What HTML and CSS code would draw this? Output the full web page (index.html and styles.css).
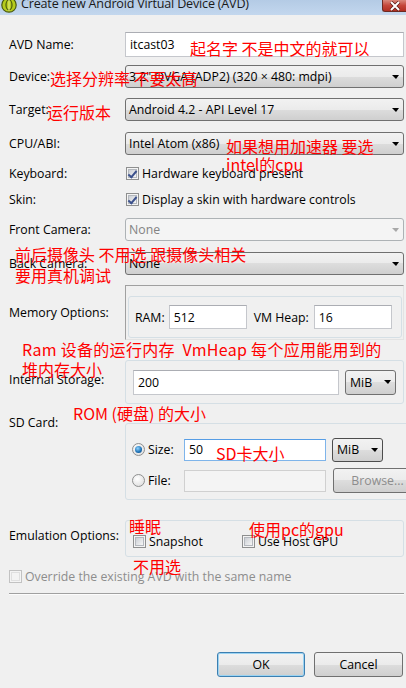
FILE: index.html
```html
<!DOCTYPE html>
<html>
<head>
<meta charset="utf-8">
<link rel="stylesheet" href="styles.css">
</head>
<body>
<div class="window">
  <div class="titlebar">
    <svg class="appicon" width="16" height="16" viewBox="0 0 16 16">
      <circle cx="8" cy="8" r="7.2" fill="#b5cc1e" stroke="#4a5a10" stroke-width="1.2"/>
      <ellipse cx="8" cy="8" rx="3" ry="5" fill="none" stroke="#4a5a10" stroke-width="1.2"/>
      <path d="M8 2 V14" stroke="#e7f08a" stroke-width="1"/>
    </svg>
    <span class="title">Create new Android Virtual Device (AVD)</span>
    <span class="close">
      <svg width="14" height="10" viewBox="0 0 14 10"><path d="M3 1 L11 9 M11 1 L3 9" stroke="#5a1a14" stroke-width="3.4"/><path d="M3 1 L11 9 M11 1 L3 9" stroke="#fff" stroke-width="2"/></svg>
    </span>
  </div>

  <div class="content">
    <div class="row r-name">
      <span class="lbl">AVD Name:</span>
      <div class="tb ctl">itcast03</div>
    </div>
    <div class="row r-device">
      <span class="lbl">Device:</span>
      <div class="combo ctl">3.2" QVGA (ADP2) (320 × 480: mdpi)</div>
    </div>
    <div class="row r-target">
      <span class="lbl">Target:</span>
      <div class="combo ctl">Android 4.2 - API Level 17</div>
    </div>
    <div class="row r-cpu">
      <span class="lbl">CPU/ABI:</span>
      <div class="combo ctl">Intel Atom (x86)</div>
    </div>
    <div class="row r-kb">
      <span class="lbl">Keyboard:</span>
      <span class="cb checked"></span><span class="cbtext">Hardware keyboard present</span>
    </div>
    <div class="row r-skin">
      <span class="lbl">Skin:</span>
      <span class="cb checked"></span><span class="cbtext">Display a skin with hardware controls</span>
    </div>
    <div class="row r-front">
      <span class="lbl">Front Camera:</span>
      <div class="combo disabled ctl">None</div>
    </div>
    <div class="row r-back">
      <span class="lbl">Back Camera:</span>
      <div class="combo ctl">None</div>
    </div>
    <div class="row r-mem">
      <span class="lbl">Memory Options:</span>
      <div class="sunken ctl">
        <div class="group memgroup">
          <span class="inlbl">RAM:</span>
          <div class="tb small">512</div>
          <span class="inlbl heap">VM Heap:</span>
          <div class="tb small">16</div>
        </div>
      </div>
    </div>
    <div class="row r-int">
      <span class="lbl uplbl">Internal Storage:</span>
      <div class="group ctl intgroup">
        <div class="tb intin">200</div>
        <div class="combo unit">MiB</div>
      </div>
    </div>
    <div class="row r-sd">
      <span class="lbl sdlbl">SD Card:</span>
      <div class="group ctl sdgroup">
        <div class="sdline">
          <span class="radio on"></span><span class="rtext">Size:</span>
          <div class="tb sdin focus">50</div>
          <div class="combo unit sdunit">MiB</div>
        </div>
        <div class="sdline">
          <span class="radio"></span><span class="rtext">File:</span>
          <div class="tb sdin dis"></div>
          <div class="btn browse">Browse...</div>
        </div>
      </div>
    </div>
    <div class="row r-emu">
      <span class="lbl uplbl">Emulation Options:</span>
      <div class="group ctl emugroup">
        <span class="cb"></span><span class="cbtext snap">Snapshot</span>
        <span class="cb"></span><span class="cbtext">Use Host GPU</span>
      </div>
    </div>
    <div class="row r-over">
      <span class="cb dis"></span><span class="cbtext distext">Override the existing AVD with the same name</span>
    </div>
    <div class="sep"></div>
    <div class="buttons">
      <div class="btn okbtn">OK</div>
      <div class="btn">Cancel</div>
    </div>
  </div>

  <div class="note n1">起名字 不是中文的就可以</div>
  <div class="note n2">选择分辨率 不要太高</div>
  <div class="note n3">运行版本</div>
  <div class="note n4">如果想用加速器 要选</div>
  <div class="note n5">intel的cpu</div>
  <div class="note n6">前后摄像头 不用选 跟摄像头相关</div>
  <div class="note n7">要用真机调试</div>
  <div class="note n8">Ram 设备的运行内存&nbsp; VmHeap 每个应用能用到的</div>
  <div class="note n9">堆内存大小</div>
  <div class="note n10">ROM (硬盘) 的大小</div>
  <div class="note n11">SD卡大小</div>
  <div class="note n12">睡眠</div>
  <div class="note n13">使用pc的gpu</div>
  <div class="note n14">不用选</div>
</div>
</body>
</html>
```

FILE: styles.css
```css
html, body {
  margin: 0;
  padding: 0;
}
body {
  background: #f0f0f0;
  font-family: "Open Sans", "Noto Sans", sans-serif;
  font-size: 12.3px;
  color: #000;
}
.window {
  position: relative;
  width: 406px;
  height: 688px;
  overflow: hidden;
}

/* title bar */
.titlebar {
  height: 15px;
  background: linear-gradient(#b4cbe5, #c3d7ee);
  display: flex;
  align-items: flex-start;
  overflow: hidden;
  position: relative;
}
.appicon {
  margin-top: -3px;
  margin-left: 1px;
  flex: none;
}
.title {
  font-size: 12.6px;
  line-height: 14px;
  margin-top: -3px;
  margin-left: 4px;
  color: #1a1a1a;
  white-space: nowrap;
  letter-spacing: -0.2px;
}
.close {
  margin-left: auto;
  width: 24px;
  height: 12px;
  background: linear-gradient(#d9897c, #c4473a 50%, #b12f22);
  border: 1px solid #6e2a22;
  border-top: none;
  border-right: none;
  border-radius: 0 0 0 3px;
  display: flex;
  align-items: center;
  justify-content: center;
  box-sizing: border-box;
}

/* form */
.content {
  padding: 0 2px 0 9px;
}
.row {
  display: flex;
  align-items: center;
}
.lbl {
  width: 116px;
  flex: none;
  white-space: nowrap;
}
.uplbl {
  margin-top: -6px;
}
.ctl {
  flex: 1;
}
.r-name { margin-top: 17px; height: 25px; }
.r-device { margin-top: 8px; height: 23px; }
.r-target { margin-top: 10px; height: 23px; }
.r-cpu { margin-top: 11px; height: 23px; }
.r-kb { margin-top: 10px; height: 16px; }
.r-skin { margin-top: 10px; height: 16px; }
.r-front { margin-top: 11px; height: 23px; }
.r-back { margin-top: 11px; height: 23px; }
.r-mem { margin-top: 10px; height: 55px; }
.r-int { margin-top: 20px; height: 44px; }
.r-sd { margin-top: 19px; height: 77px; align-items: flex-start; }
.r-emu { margin-top: 20px; height: 37px; }
.r-over { margin-top: 11px; height: 16px; }

.sdlbl {
  margin-top: -9px;
}

/* text box */
.tb {
  box-sizing: border-box;
  height: 25px;
  background: #fff;
  border: 1px solid #c5c7cc;
  border-top-color: #abadb3;
  padding: 0 4px;
  display: flex;
  align-items: center;
  white-space: nowrap;
}
.tb.small {
  width: 78px;
  height: 24px;
  flex: none;
}
.tb.focus {
  border-color: #7eb4ea;
  border-top-color: #569de5;
}
.tb.dis {
  background: #f4f4f4;
  border-color: #d0d0d0;
}

/* combo */
.combo {
  box-sizing: border-box;
  height: 23px;
  border: 1px solid #707070;
  border-radius: 3px;
  background: linear-gradient(#f2f2f2 0%, #ebebeb 50%, #dddddd 50%, #cfcfcf 100%);
  display: flex;
  align-items: center;
  padding-left: 3px;
  position: relative;
  white-space: nowrap;
}
.combo::after {
  content: "";
  position: absolute;
  right: 4px;
  top: 50%;
  margin-top: -2px;
  border-left: 4px solid transparent;
  border-right: 3px solid transparent;
  border-top: 4px solid #000;
}
.combo.disabled {
  background: #f4f4f4;
  border-color: #adb2b5;
  color: #838383;
}
.combo.disabled::after {
  border-top-color: #a8a8a8;
}

/* checkbox */
.cb {
  width: 13px;
  height: 13px;
  box-sizing: border-box;
  border: 1px solid #8e8f8f;
  background: #f4f4f4;
  flex: none;
  position: relative;
  margin-left: 1px;
}
.cb::before {
  content: "";
  position: absolute;
  left: 1px;
  top: 1px;
  width: 9px;
  height: 9px;
  box-sizing: border-box;
  border: 1px solid #b4b8be;
  background: linear-gradient(135deg, #cbcfd5, #f6f6f6);
}
.cb.checked::after {
  content: "";
  position: absolute;
  left: 3px;
  top: 1px;
  width: 3px;
  height: 7px;
  border-right: 2px solid #3c518c;
  border-bottom: 2px solid #3c518c;
  transform: rotate(40deg);
}
.cb.dis {
  border-color: #c2c2c2;
  margin-left: 0;
}
.cb.dis::before {
  border-color: #e0e0e0;
  background: #f4f4f4;
}
.cbtext {
  margin-left: 3px;
  white-space: nowrap;
}
.distext {
  color: #8d8d8d;
}

/* group boxes */
.group {
  box-sizing: border-box;
  border: 1px solid #d5dfe5;
  border-radius: 3px;
}
.sunken {
  box-sizing: border-box;
  height: 55px;
  border: 1px solid #a0a0a0;
  border-right-color: #e3e3e3;
  border-bottom-color: #e3e3e3;
  padding: 10px 1px 1px 2px;
}
.memgroup {
  height: 42px;
  display: flex;
  align-items: center;
  padding-left: 6px;
}
.inlbl {
  margin-right: 4px;
}
.heap {
  margin-left: 7px;
  margin-right: 5px;
}
.intgroup {
  height: 44px;
  display: flex;
  align-items: center;
  padding-left: 7px;
}
.intin {
  width: 206px;
  flex: none;
}
.unit {
  width: 51px;
  height: 25px;
  flex: none;
  margin-left: 6px;
  padding-left: 4px;
}
.sdgroup {
  height: 77px;
  padding: 14px 0 0 6px;
}
.sdline {
  display: flex;
  align-items: center;
  height: 23px;
}
.sdline + .sdline {
  margin-top: 8px;
}
.radio {
  width: 13px;
  height: 13px;
  box-sizing: border-box;
  border-radius: 50%;
  border: 1px solid #8e8f8f;
  background: radial-gradient(circle at 40% 35%, #ffffff, #d8d8d8);
  flex: none;
  position: relative;
}
.radio.on::after {
  content: "";
  position: absolute;
  left: 2px;
  top: 2px;
  width: 7px;
  height: 7px;
  border-radius: 50%;
  background: radial-gradient(circle at 40% 35%, #8fd3ff, #1b6fb3 60%, #0e4177);
}
.rtext {
  margin-left: 3px;
  width: 36px;
}
.sdin {
  width: 142px;
  height: 22px;
  flex: none;
}
.sdunit {
  width: 51px;
  height: 24px;
  margin-left: 6px;
  border-color: #4d4d4d;
}
.browse {
  width: 61px;
  height: 24px;
  margin-left: 7px;
  color: #8d8d8d;
  border-color: #c0c0c0;
  background: #f4f4f4;
}
.emugroup {
  height: 37px;
  display: flex;
  align-items: center;
  padding: 6px 0 0 6px;
}
.snap {
  width: 92px;
}

/* separator + buttons */
.sep {
  margin-top: 9px;
  height: 1px;
  background: #a0a0a0;
  border-bottom: 1px solid #fcfcfc;
}
.buttons {
  display: flex;
  justify-content: flex-end;
  margin-top: 57px;
  gap: 9px;
  padding-right: 1px;
}
.btn {
  box-sizing: border-box;
  width: 89px;
  height: 25px;
  border: 1px solid #707070;
  border-radius: 3px;
  background: linear-gradient(#f2f2f2 0%, #ebebeb 50%, #dddddd 50%, #cfcfcf 100%);
  display: flex;
  align-items: center;
  justify-content: center;
  white-space: nowrap;
}
.okbtn {
  width: 88px;
  border-color: #3c7fb1;
  box-shadow: inset 0 0 0 1px #9bd3f2;
}

/* red annotations */
.note {
  position: absolute;
  color: #ff0000;
  font-family: "Noto Sans CJK SC", "Noto Sans", sans-serif;
  font-size: 16px;
  line-height: 16px;
  white-space: nowrap;
}
.n1 { left: 190px; top: 40px; }
.n2 { left: 50px; top: 70px; }
.n3 { left: 47px; top: 104px; }
.n4 { left: 226px; top: 138px; }
.n5 { left: 226px; top: 156px; }
.n6 { left: 15px; top: 246px; }
.n7 { left: 15px; top: 267px; }
.n8 { left: 22px; top: 341px; letter-spacing: 0.3px; }
.n9 { left: 22px; top: 361px; }
.n10 { left: 73px; top: 405px; }
.n11 { left: 216px; top: 445px; }
.n12 { left: 129px; top: 518px; }
.n13 { left: 249px; top: 521px; }
.n14 { left: 133px; top: 558px; }
```
